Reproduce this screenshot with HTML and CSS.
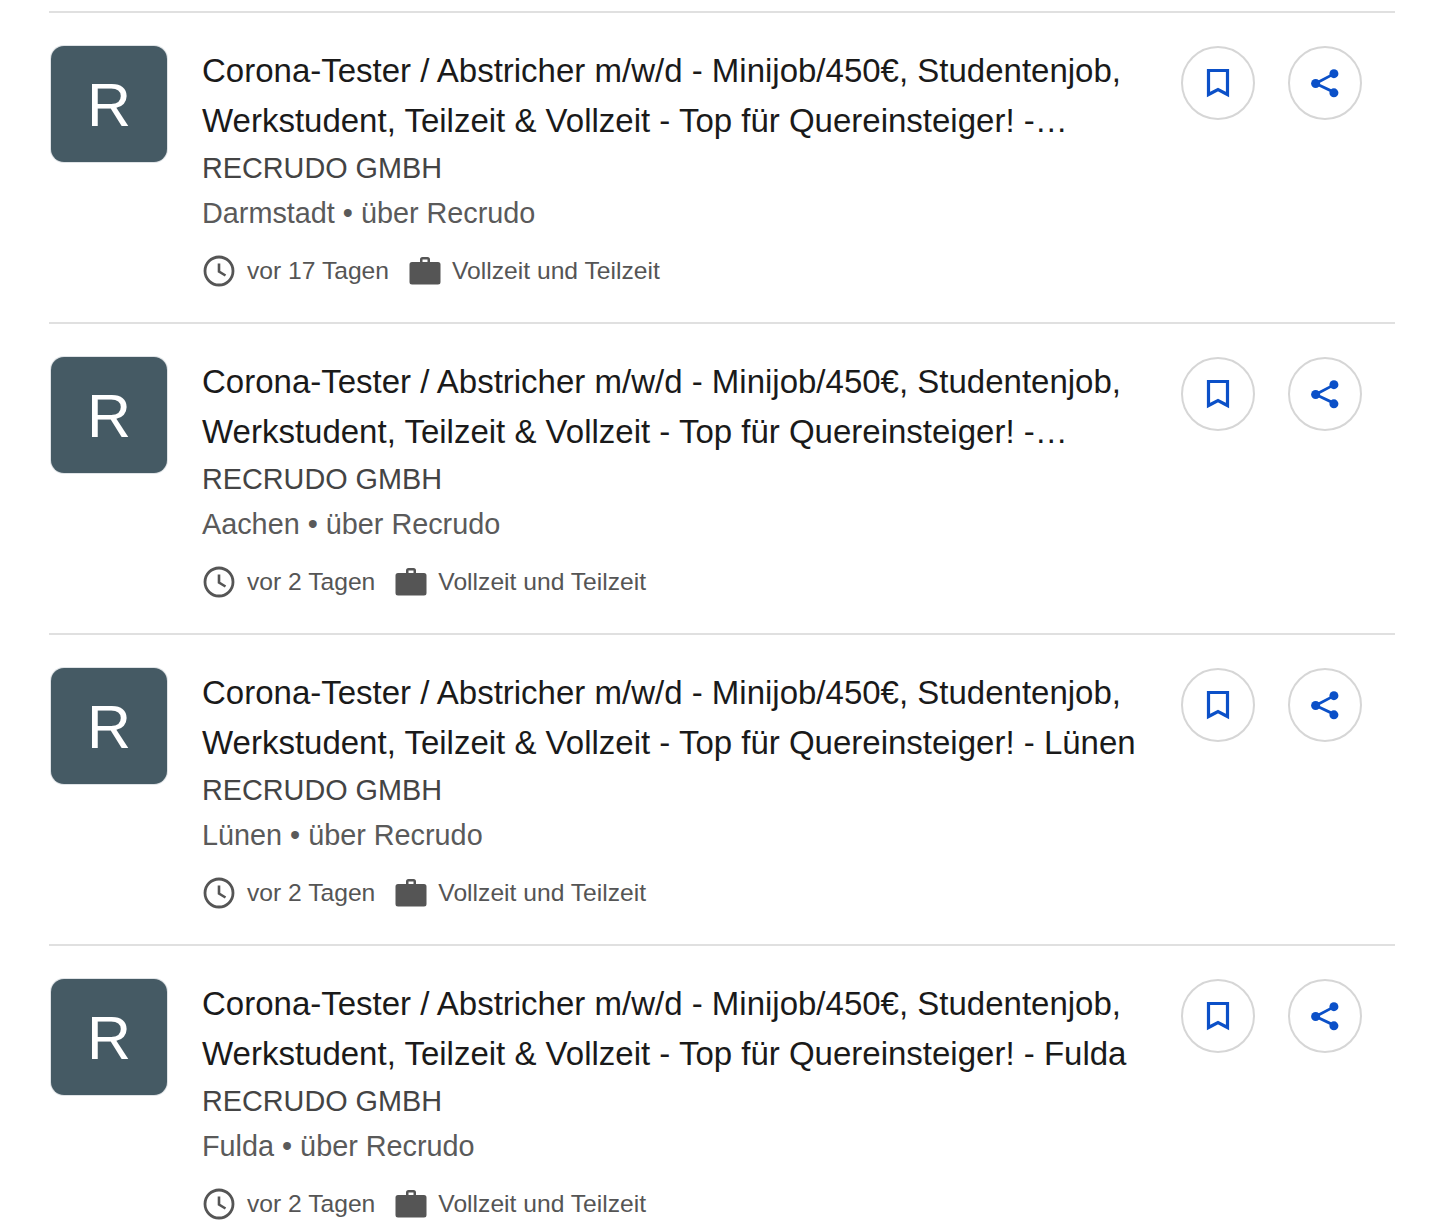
FILE: index.html
```html
<!DOCTYPE html>
<html lang="de">
<head>
<meta charset="utf-8">
<title>Jobs</title>
<link rel="stylesheet" href="styles.css">
</head>
<body>
<svg class="defs" width="0" height="0" aria-hidden="true">
  <symbol id="i-clock" viewBox="0 0 32 32">
    <circle cx="16" cy="16" r="14" fill="none" stroke="currentColor" stroke-width="2.8"/>
    <path d="M16 8.5V16.6L22.5 20.5" fill="none" stroke="currentColor" stroke-width="2.6"/>
  </symbol>
  <symbol id="i-case" viewBox="0 0 32 32">
    <path fill="currentColor" fill-rule="evenodd" d="M11 7V4.5A2.5 2.5 0 0 1 13.5 2h5A2.5 2.5 0 0 1 21 4.500V7h8a2.500 2.500 0 0 1 2.500 2.500V27a2.500 2.500 0 0 1-2.500 2.500H3A2.500 2.500 0 0 1 .5 27V9.500A2.500 2.500 0 0 1 3 7zM13.500 4.500V7h5V4.500z"/>
  </symbol>
  <symbol id="i-mark" viewBox="0 0 24 30">
    <path d="M2.500 2.500H21.500V26.500L12 21.500L2.500 26.500Z" fill="none" stroke="currentColor" stroke-width="3.200"/>
  </symbol>
  <symbol id="i-share" viewBox="0 0 32 32">
    <path d="M26 6L6 16.500L26 26" fill="none" stroke="currentColor" stroke-width="3"/>
    <circle cx="25.500" cy="6" r="4.800" fill="currentColor"/>
    <circle cx="6" cy="16.500" r="4.800" fill="currentColor"/>
    <circle cx="25.500" cy="26.500" r="4.800" fill="currentColor"/>
  </symbol>
</svg>
<main class="list">
  <article class="job">
    <div class="logo">R</div>
    <div class="info">
      <h2 class="title">Corona-Tester / Abstricher m/w/d - Minijob/450€, Studentenjob, Werkstudent, Teilzeit &amp; Vollzeit - Top für Quereinsteiger! -…</h2>
      <div class="company">RECRUDO GMBH</div>
      <div class="place">Darmstadt • über Recrudo</div>
      <div class="meta">
        <svg class="ico-clock"><use href="#i-clock"/></svg><span class="when">vor 17 Tagen</span>
        <svg class="ico-case"><use href="#i-case"/></svg><span>Vollzeit und Teilzeit</span>
      </div>
    </div>
    <div class="actions">
      <button class="round" aria-label="Speichern"><svg class="ico-mark"><use href="#i-mark"/></svg></button>
      <button class="round" aria-label="Teilen"><svg class="ico-share"><use href="#i-share"/></svg></button>
    </div>
  </article>
  <article class="job">
    <div class="logo">R</div>
    <div class="info">
      <h2 class="title">Corona-Tester / Abstricher m/w/d - Minijob/450€, Studentenjob, Werkstudent, Teilzeit &amp; Vollzeit - Top für Quereinsteiger! -…</h2>
      <div class="company">RECRUDO GMBH</div>
      <div class="place">Aachen • über Recrudo</div>
      <div class="meta">
        <svg class="ico-clock"><use href="#i-clock"/></svg><span class="when">vor 2 Tagen</span>
        <svg class="ico-case"><use href="#i-case"/></svg><span>Vollzeit und Teilzeit</span>
      </div>
    </div>
    <div class="actions">
      <button class="round" aria-label="Speichern"><svg class="ico-mark"><use href="#i-mark"/></svg></button>
      <button class="round" aria-label="Teilen"><svg class="ico-share"><use href="#i-share"/></svg></button>
    </div>
  </article>
  <article class="job">
    <div class="logo">R</div>
    <div class="info">
      <h2 class="title">Corona-Tester / Abstricher m/w/d - Minijob/450€, Studentenjob, Werkstudent, Teilzeit &amp; Vollzeit - Top für Quereinsteiger! - Lünen</h2>
      <div class="company">RECRUDO GMBH</div>
      <div class="place">Lünen • über Recrudo</div>
      <div class="meta">
        <svg class="ico-clock"><use href="#i-clock"/></svg><span class="when">vor 2 Tagen</span>
        <svg class="ico-case"><use href="#i-case"/></svg><span>Vollzeit und Teilzeit</span>
      </div>
    </div>
    <div class="actions">
      <button class="round" aria-label="Speichern"><svg class="ico-mark"><use href="#i-mark"/></svg></button>
      <button class="round" aria-label="Teilen"><svg class="ico-share"><use href="#i-share"/></svg></button>
    </div>
  </article>
  <article class="job">
    <div class="logo">R</div>
    <div class="info">
      <h2 class="title">Corona-Tester / Abstricher m/w/d - Minijob/450€, Studentenjob, Werkstudent, Teilzeit &amp; Vollzeit - Top für Quereinsteiger! - Fulda</h2>
      <div class="company">RECRUDO GMBH</div>
      <div class="place">Fulda • über Recrudo</div>
      <div class="meta">
        <svg class="ico-clock"><use href="#i-clock"/></svg><span class="when">vor 2 Tagen</span>
        <svg class="ico-case"><use href="#i-case"/></svg><span>Vollzeit und Teilzeit</span>
      </div>
    </div>
    <div class="actions">
      <button class="round" aria-label="Speichern"><svg class="ico-mark"><use href="#i-mark"/></svg></button>
      <button class="round" aria-label="Teilen"><svg class="ico-share"><use href="#i-share"/></svg></button>
    </div>
  </article>
</main>
</body>
</html>
```
FILE: styles.css
```css
* { box-sizing: border-box; }
html, body { margin: 0; background: #fff; }
body {
  height: 1228px;
  overflow: hidden;
  padding: 11px 61px 0 49px;
  font-family: "Liberation Sans", Arial, sans-serif;
}
.defs { position: absolute; }
.job {
  display: flex;
  height: 311px;
  padding: 33px 0 0 2px;
  border-top: 2px solid #e0e0e0;
}
.logo {
  flex: none;
  width: 116px;
  height: 116px;
  border-radius: 13px;
  background: #455a64;
  box-shadow: 0 0 0 1px #dfe3e6;
  color: #fff;
  font-size: 61px;
  line-height: 118px;
  text-align: center;
}
.info {
  flex: none;
  width: 945px;
  margin-left: 35px;
}
.title {
  margin: 0;
  font-size: 33px;
  font-weight: 400;
  line-height: 49.500px;
  color: #1a1a1a;
}
.company {
  font-size: 28.800px;
  line-height: 46px;
  color: #444;
}
.place {
  font-size: 28.800px;
  line-height: 45px;
  color: #5a5a5a;
}
.meta {
  display: flex;
  align-items: center;
  margin-top: 11px;
  height: 47px;
  font-size: 24.650px;
  color: #555;
}
.ico-clock { width: 32px; height: 32px; margin: 0 12px 0 1px; }
.ico-case { width: 32px; height: 32px; margin: 0 11px 0 20px; }
.when { white-space: nowrap; }
.actions {
  display: flex;
  gap: 33px;
  margin-left: 34px;
}
.round {
  width: 74px;
  height: 74px;
  padding: 0;
  display: flex;
  align-items: center;
  justify-content: center;
  background: #fff;
  border: 2px solid #d6d6d6;
  border-radius: 50%;
  color: #0b50c8;
}
.ico-mark { width: 24px; height: 30px; }
.ico-share { width: 30px; height: 30px; }
```
